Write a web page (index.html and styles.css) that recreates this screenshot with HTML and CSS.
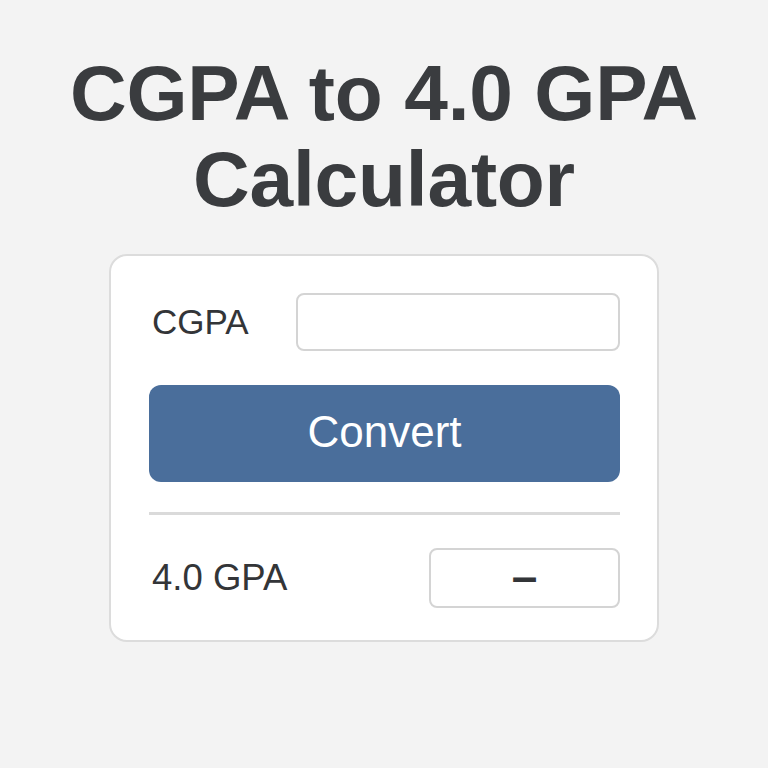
FILE: index.html
```html
<!DOCTYPE html>
<html lang="en">
<head>
<meta charset="utf-8">
<title>CGPA to 4.0 GPA Calculator</title>
<link rel="stylesheet" href="styles.css">
</head>
<body>
  <main class="page">
    <h1 class="title">CGPA to 4.0 GPA<br>Calculator</h1>
    <section class="card">
      <div class="row row-input">
        <label class="label" for="cgpa">CGPA</label>
        <input class="field" id="cgpa" type="text">
      </div>
      <button class="convert" type="button">Convert</button>
      <hr class="divider">
      <div class="row row-output">
        <span class="label">4.0 GPA</span>
        <output class="result">–</output>
      </div>
    </section>
  </main>
</body>
</html>
```

FILE: styles.css
```css
html, body {
  margin: 0;
  padding: 0;
  background: #f3f3f3;
}

body {
  font-family: "Liberation Sans", Arial, sans-serif;
  color: #333538;
}

.page {
  display: flex;
  flex-direction: column;
  align-items: center;
  padding-top: 50px;
}

.title {
  margin: 0 0 32px;
  font-size: 78.5px;
  line-height: 86px;
  font-weight: 700;
  letter-spacing: -0.2px;
  text-align: center;
  color: #3a3c3f;
}

.card {
  box-sizing: border-box;
  width: 550px;
  height: 388px;
  background: #ffffff;
  border: 2px solid #dcdcdc;
  border-radius: 18px;
  padding: 37px 37px 0 38px;
  display: flex;
  flex-direction: column;
}

.row {
  display: flex;
  align-items: center;
  justify-content: space-between;
}

.label {
  font-size: 35px;
  color: #333538;
  padding-left: 3px;
}

.row-output .label {
  font-size: 36.5px;
}

.field {
  box-sizing: border-box;
  width: 324px;
  height: 58px;
  border: 2px solid #d4d4d4;
  border-radius: 8px;
  background: #ffffff;
  outline: none;
}

.convert {
  margin-top: 34px;
  height: 97px;
  border: none;
  border-radius: 12px;
  background: #4a6e9b;
  color: #ffffff;
  font-family: "Liberation Sans", Arial, sans-serif;
  font-size: 44px;
  padding: 0 0 4px;
}

.divider {
  margin: 30px 0 33px;
  border: none;
  height: 3px;
  background: #dadada;
}

.result {
  box-sizing: border-box;
  width: 191px;
  height: 60px;
  border: 2px solid #d4d4d4;
  border-radius: 8px;
  display: flex;
  align-items: center;
  justify-content: center;
  font-size: 46px;
  font-weight: 700;
  color: #333538;
  padding-bottom: 4px;
}
```
